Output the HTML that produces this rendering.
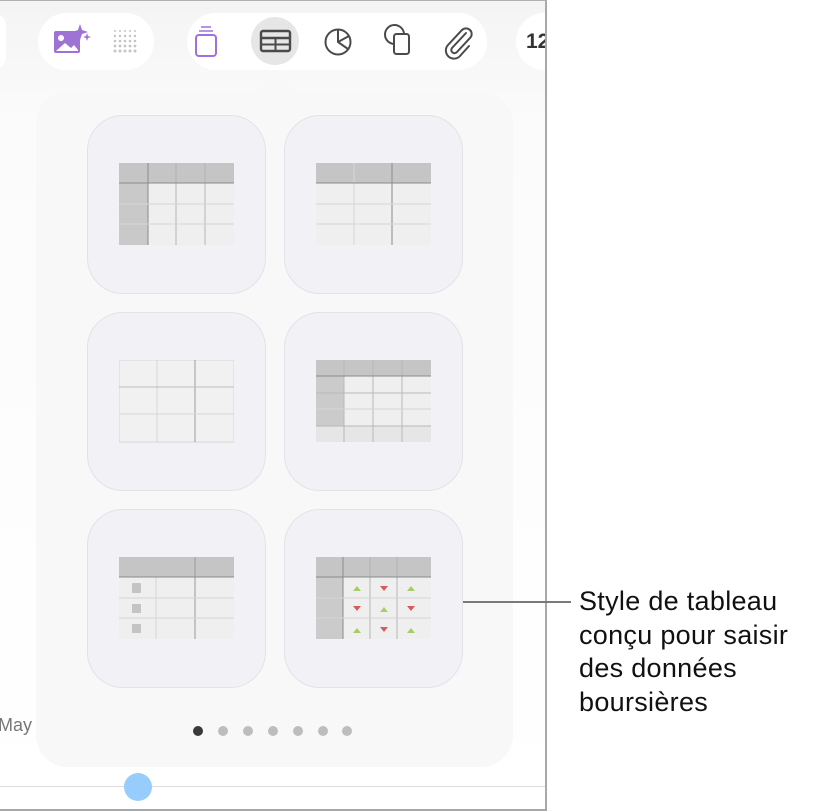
<!DOCTYPE html>
<html><head><meta charset="utf-8"><style>
body{margin:0;width:822px;height:812px;background:#fff;position:relative;overflow:hidden;font-family:"Liberation Sans",sans-serif}
.frame{position:absolute;left:0;top:0;width:545px;height:808px;border-right:2px solid #a8a8a8;border-bottom:2px solid #a8a8a8;border-top:1px solid #b0b0b0;background:linear-gradient(#f4f4f4,#fbfbfb 120px,#fff);overflow:hidden}
.pill{position:absolute;background:#fff;border-radius:29px;height:57px;top:12px}
.panel{position:absolute;left:36px;top:91px;width:477px;height:675px;background:#f8f8f8;border-radius:32px}
.tile{position:absolute;width:179px;height:179px;background:#f2f2f6;border:1px solid #e2e2e8;border-radius:36px;box-sizing:border-box}
.tile svg{position:absolute;left:31px;top:47px}
.dot{position:absolute;top:725px;width:10px;height:10px;border-radius:50%;background:#bdbdbd}
.txt{position:absolute;left:579px;top:585px;font-size:27px;line-height:33.7px;color:#111;letter-spacing:0.3px}
</style></head><body>
<div class="frame">
<div class="pill" style="left:-20px;width:26px"></div>
<div class="pill" style="left:38px;width:116px"></div>
<div class="pill" style="left:187px;width:300px"></div>
<div class="pill" style="left:516px;width:60px"></div>
<div style="position:absolute;left:526px;top:29px;font-size:21px;font-weight:bold;color:#333">12</div>
<svg style="position:absolute;left:0;top:-1px" width="546" height="100">
 <rect x="54" y="31" width="26" height="22" rx="2" fill="#9f72d6"/>
 <circle cx="61" cy="38" r="3" fill="#fff"/>
 <path d="M56 51 L65 43 L71 48 L74 45 L78 50 L78 51 Z" fill="#fff"/>
 <path d="M80 24 L82 30 L88 32 L82 34 L80 40 L78 34 L72 32 L78 30Z" fill="#9f72d6"/>
 <path d="M87 33 L88 36 L91 37 L88 38 L87 41 L86 38 L83 37 L86 36Z" fill="#9f72d6"/>
 <g fill="#c4c4c4">
  <circle cx="115" cy="31" r="1"/><circle cx="120" cy="31" r="1"/><circle cx="125" cy="31" r="1"/><circle cx="130" cy="31" r="1"/><circle cx="135" cy="31" r="1"/>
  <circle cx="115" cy="36" r="1.2"/><circle cx="120" cy="36" r="1.2"/><circle cx="125" cy="36" r="1.2"/><circle cx="130" cy="36" r="1.2"/><circle cx="135" cy="36" r="1.2"/>
  <circle cx="115" cy="41" r="1.3"/><circle cx="120" cy="41" r="1.3"/><circle cx="125" cy="41" r="1.3"/><circle cx="130" cy="41" r="1.3"/><circle cx="135" cy="41" r="1.3"/>
  <circle cx="115" cy="46" r="1.4"/><circle cx="120" cy="46" r="1.4"/><circle cx="125" cy="46" r="1.4"/><circle cx="130" cy="46" r="1.4"/><circle cx="135" cy="46" r="1.4"/>
  <circle cx="115" cy="51" r="1.5"/><circle cx="120" cy="51" r="1.5"/><circle cx="125" cy="51" r="1.5"/><circle cx="130" cy="51" r="1.5"/><circle cx="135" cy="51" r="1.5"/>
 </g>
 <rect x="196" y="35" width="20" height="21" rx="3" fill="none" stroke="#a070dc" stroke-width="2"/>
 <line x1="199" y1="31" x2="213" y2="31" stroke="#a070dc" stroke-width="1.5"/>
 <line x1="201" y1="27" x2="211" y2="27" stroke="#a070dc" stroke-width="1.5"/>
 <circle cx="275" cy="41" r="24" fill="#e6e6e6"/>
 <rect x="261" y="31" width="29" height="20" rx="2" fill="#e6e6e6" stroke="#4a4a4a" stroke-width="2.4"/>
 <line x1="261" y1="38" x2="290" y2="38" stroke="#4a4a4a" stroke-width="2.4"/>
 <line x1="261" y1="44.5" x2="290" y2="44.5" stroke="#4a4a4a" stroke-width="2"/>
 <line x1="275.5" y1="38" x2="275.5" y2="51" stroke="#4a4a4a" stroke-width="2"/>
 <circle cx="338" cy="42" r="12.5" fill="none" stroke="#4a4a4a" stroke-width="2"/>
 <path d="M338 29.5 V42 L348 49 M338 42 L349 36" fill="none" stroke="#4a4a4a" stroke-width="2"/>
 <path d="M394 44 A9.5 9.5 0 1 1 404 34" fill="none" stroke="#4a4a4a" stroke-width="2"/>
 <rect x="394" y="34" width="15" height="20" rx="2.5" fill="none" stroke="#4a4a4a" stroke-width="2"/>
 <path d="M466 33 L452 48 A3 3 0 0 0 457 52 L470 38 A5.5 5.5 0 0 0 462 30 L448 45 A8 8 0 0 0 460 56 L469 46" fill="none" stroke="#4a4a4a" stroke-width="2" stroke-linecap="round"/>
 <path d="M255 93 L269 78 Q275 73 281 78 L295 93Z" fill="#f8f8f8"/>
</svg>
<div class="panel"></div>

<div class="tile" style="left:87px;top:114px">
<svg width="115" height="83"><rect width="115" height="82" fill="#efefef"/><rect width="115" height="20" fill="#c4c5c4"/><rect y="20" width="29" height="62" fill="#c9c9c9"/>
<g stroke="#b4b4b4"><line x1="29" y1="0" x2="29" y2="82" stroke="#8a8a8a"/><line x1="57" y1="0" x2="57" y2="82"/><line x1="86" y1="0" x2="86" y2="82"/><line x1="0" y1="20" x2="115" y2="20" stroke="#8a8a8a"/><line x1="0" y1="41" x2="115" y2="41" stroke="#d6d6d6"/><line x1="0" y1="61" x2="115" y2="61" stroke="#d6d6d6"/></g></svg></div>

<div class="tile" style="left:284px;top:114px">
<svg width="115" height="83"><rect width="115" height="82" fill="#efefef"/><rect width="115" height="20" fill="#c4c5c4"/>
<g stroke="#d6d6d6"><line x1="38" y1="0" x2="38" y2="82"/><line x1="76" y1="0" x2="76" y2="82" stroke="#8a8a8a"/><line x1="0" y1="20" x2="115" y2="20" stroke="#8a8a8a"/><line x1="0" y1="41" x2="115" y2="41"/><line x1="0" y1="61" x2="115" y2="61"/></g></svg></div>

<div class="tile" style="left:87px;top:311px">
<svg width="115" height="83"><rect width="115" height="82" fill="#f1f1f1" stroke="#d6d6d6"/>
<g stroke="#d6d6d6"><line x1="38" y1="0" x2="38" y2="82"/><line x1="76" y1="0" x2="76" y2="82" stroke="#9a9a9a"/><line x1="0" y1="27" x2="115" y2="27" stroke="#bdbdbd"/><line x1="0" y1="54" x2="115" y2="54"/></g></svg></div>

<div class="tile" style="left:284px;top:311px">
<svg width="115" height="83"><rect width="115" height="82" fill="#efefef"/><rect width="115" height="16" fill="#c4c5c4"/><rect y="16" width="28" height="50" fill="#cbcbcb"/><rect y="66" width="115" height="16" fill="#e6e6e6"/>
<g stroke="#b8b8b8"><line x1="28" y1="0" x2="28" y2="82"/><line x1="57" y1="0" x2="57" y2="82"/><line x1="86" y1="0" x2="86" y2="82"/><line x1="0" y1="16" x2="115" y2="16" stroke="#8a8a8a"/><line x1="0" y1="33" x2="115" y2="33"/><line x1="0" y1="49" x2="115" y2="49" stroke="#d6d6d6"/><line x1="0" y1="66" x2="115" y2="66"/></g></svg></div>

<div class="tile" style="left:87px;top:508px">
<svg width="115" height="83"><rect width="115" height="82" fill="#efefef"/><rect width="115" height="20" fill="#c4c5c4"/>
<g stroke="#d6d6d6"><line x1="37" y1="20" x2="37" y2="82"/><line x1="76" y1="0" x2="76" y2="82" stroke="#9a9a9a"/><line x1="0" y1="20" x2="115" y2="20" stroke="#8a8a8a"/><line x1="0" y1="41" x2="115" y2="41"/><line x1="0" y1="61" x2="115" y2="61"/></g>
<g fill="#c4c4c4"><rect x="13" y="26" width="9" height="10" rx="1"/><rect x="13" y="47" width="9" height="9"/><rect x="13" y="67" width="9" height="9"/></g></svg></div>

<div class="tile" style="left:284px;top:508px">
<svg width="115" height="83"><rect width="115" height="82" fill="#efefef"/><rect width="115" height="20" fill="#c4c5c4"/><rect y="20" width="27" height="62" fill="#cbcbcb"/>
<g stroke="#b4b4b4"><line x1="27" y1="0" x2="27" y2="82" stroke="#8a8a8a"/><line x1="54" y1="0" x2="54" y2="82"/><line x1="81" y1="0" x2="81" y2="82"/><line x1="0" y1="20" x2="115" y2="20" stroke="#8a8a8a"/><line x1="0" y1="41" x2="115" y2="41" stroke="#d6d6d6"/><line x1="0" y1="61" x2="115" y2="61" stroke="#d6d6d6"/></g>
<g fill="#a8cc6a"><path d="M37 34 l4 -5 l4 5z"/><path d="M91 34 l4 -5 l4 5z"/><path d="M64 55 l4 -5 l4 5z"/><path d="M37 76 l4 -5 l4 5z"/><path d="M91 76 l4 -5 l4 5z"/></g>
<g fill="#d85b5b"><path d="M64 29 l4 5 l4 -5z"/><path d="M37 49 l4 5 l4 -5z"/><path d="M91 49 l4 5 l4 -5z"/><path d="M64 70 l4 5 l4 -5z"/></g></svg></div>

<div class="dot" style="left:193px;background:#3a3a3a"></div>
<div class="dot" style="left:218px"></div><div class="dot" style="left:243px"></div><div class="dot" style="left:268px"></div><div class="dot" style="left:293px"></div><div class="dot" style="left:318px"></div><div class="dot" style="left:342px"></div>
<div style="position:absolute;left:-2px;top:714px;font-size:18px;color:#777">May</div>
<div style="position:absolute;left:0;top:785px;width:545px;height:1px;background:#dcdcdc"></div>
<div style="position:absolute;left:124px;top:772px;width:28px;height:28px;border-radius:50%;background:#96cdfc"></div>
</div>
<div style="position:absolute;left:463px;top:601px;width:108px;height:2px;background:#7a7a7a"></div>
<div class="txt">Style de tableau<br>conçu pour saisir<br>des données<br>boursières</div>
</body></html>
